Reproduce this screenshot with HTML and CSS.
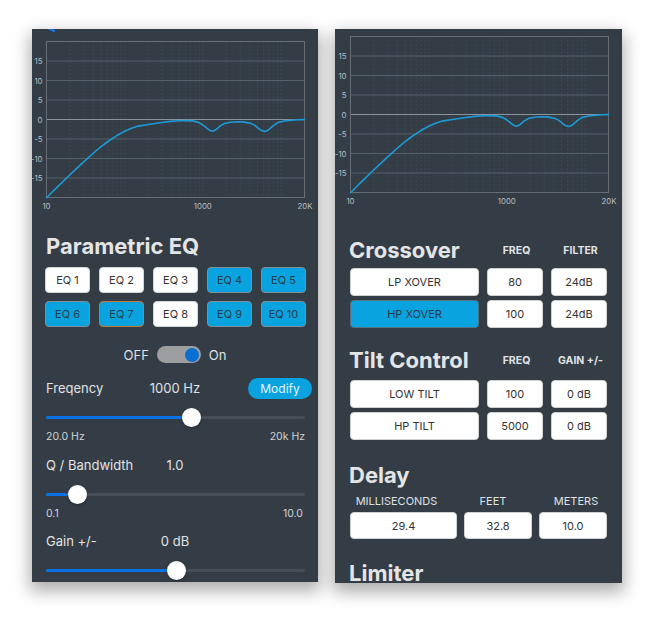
FILE: index.html
```html
<!DOCTYPE html>
<html>
<head>
<meta charset="utf-8">
<link rel="stylesheet" href="styles.css">
</head>
<body>
<div class="stage">
  <section class="panel panel-left">
    <svg class="chart chart-left" width="286" height="204" viewBox="0 0 286 204">
      <path class="back" d="M16,-1 L22,2"/>
      <g transform="translate(14.5,12.5)">
        <path class="vgrid" d="M23.53,0V156M37.29,0V156M47.05,0V156M54.63,0V156M60.82,0V156M66.05,0V156M70.58,0V156M74.58,0V156M78.16,0V156M101.69,0V156M115.45,0V156M125.21,0V156M132.79,0V156M138.98,0V156M144.21,0V156M148.74,0V156M152.74,0V156M156.31,0V156M179.85,0V156M193.61,0V156M203.37,0V156M210.95,0V156M217.14,0V156M222.37,0V156M226.9,0V156M230.9,0V156M234.47,0V156"/>
        <path class="hgrid" d="M0,19.5H258M0,39H258M0,58.5H258M0,97.5H258M0,117H258M0,136.5H258"/>
        <path class="zero" d="M0,78H258"/>
        <rect class="frame" x="0" y="0" width="258" height="156"/>
        <polyline class="curve" points="0,156.2 6,150.2 12,144.4 23.5,133.2 35,122.3 47,111.5 54,105.7 60.7,100.5 70,94.3 78.2,89.7 85,86.7 91.9,84.6 101.7,83 115.4,81 124,79.9 132.8,79.3 140,79.1 146,79.4 152,80.9 156,83.2 160,86.4 163,88.7 165.7,89.8 168.5,88.8 171,86.8 174,84.2 178,82 184,80.7 191,80.3 198,80.6 204,81.7 208,83.6 212,86.8 215,89.1 218.3,90 221,89.1 224,86.6 228,83.2 232,80.9 238,79.5 245,78.7 252,78.3 258,78.1"/>
        <g class="axis ylab">
          <text x="-4" y="19.5">15</text>
          <text x="-4" y="39">10</text>
          <text x="-4" y="58.5">5</text>
          <text x="-4" y="78">0</text>
          <text x="-4" y="97.5">-5</text>
          <text x="-4" y="117">-10</text>
          <text x="-4" y="136.5">-15</text>
        </g>
        <g class="axis xlab">
          <text x="0" y="164">10</text>
          <text x="156.3" y="164">1000</text>
          <text x="258.5" y="164">20K</text>
        </g>
      </g>
    </svg>

    <h2 class="title">Parametric EQ</h2>
    <div class="eq-grid">
      <div class="btn">EQ 1</div>
      <div class="btn">EQ 2</div>
      <div class="btn">EQ 3</div>
      <div class="btn btn-on">EQ 4</div>
      <div class="btn btn-on">EQ 5</div>
      <div class="btn btn-on">EQ 6</div>
      <div class="btn btn-on btn-sel">EQ 7</div>
      <div class="btn">EQ 8</div>
      <div class="btn btn-on">EQ 9</div>
      <div class="btn btn-on">EQ 10</div>
    </div>

    <div class="toggle-row">
      <span>OFF</span>
      <span class="switch"><span class="knob"></span></span>
      <span>On</span>
    </div>

    <div class="param param-first">
      <span class="p-label">Freqency</span>
      <span class="p-value">1000 Hz</span>
      <span class="modify">Modify</span>
    </div>
    <div class="slider">
      <div class="track"></div>
      <div class="fill" style="width:56%"></div>
      <div class="thumb" style="left:56%"></div>
    </div>
    <div class="scale"><span>20.0 Hz</span><span>20k Hz</span></div>

    <div class="param">
      <span class="p-label">Q / Bandwidth</span>
      <span class="p-value">1.0</span>
      <span></span>
    </div>
    <div class="slider">
      <div class="track"></div>
      <div class="fill" style="width:12%"></div>
      <div class="thumb" style="left:12%"></div>
    </div>
    <div class="scale scale-inset"><span>0.1</span><span>10.0</span></div>

    <div class="param">
      <span class="p-label">Gain +/-</span>
      <span class="p-value">0 dB</span>
      <span></span>
    </div>
    <div class="slider">
      <div class="track"></div>
      <div class="fill" style="width:50.2%"></div>
      <div class="thumb" style="left:50.2%"></div>
    </div>
  </section>

  <section class="panel panel-right">
    <svg class="chart chart-right" width="287" height="208" viewBox="0 0 287 208">
      <g transform="translate(15.5,7.5)">
        <path class="vgrid" d="M23.53,0V156M37.29,0V156M47.05,0V156M54.63,0V156M60.82,0V156M66.05,0V156M70.58,0V156M74.58,0V156M78.16,0V156M101.69,0V156M115.45,0V156M125.21,0V156M132.79,0V156M138.98,0V156M144.21,0V156M148.74,0V156M152.74,0V156M156.31,0V156M179.85,0V156M193.61,0V156M203.37,0V156M210.95,0V156M217.14,0V156M222.37,0V156M226.9,0V156M230.9,0V156M234.47,0V156"/>
        <path class="hgrid" d="M0,19.5H258M0,39H258M0,58.5H258M0,97.5H258M0,117H258M0,136.5H258"/>
        <path class="zero" d="M0,78H258"/>
        <rect class="frame" x="0" y="0" width="258" height="156"/>
        <polyline class="curve" points="0,156.2 6,150.2 12,144.4 23.5,133.2 35,122.3 47,111.5 54,105.7 60.7,100.5 70,94.3 78.2,89.7 85,86.7 91.9,84.6 101.7,83 115.4,81 124,79.9 132.8,79.3 140,79.1 146,79.4 152,80.9 156,83.2 160,86.4 163,88.7 165.7,89.8 168.5,88.8 171,86.8 174,84.2 178,82 184,80.7 191,80.3 198,80.6 204,81.7 208,83.6 212,86.8 215,89.1 218.3,90 221,89.1 224,86.6 228,83.2 232,80.9 238,79.5 245,78.7 252,78.3 258,78.1"/>
        <g class="axis ylab">
          <text x="-4" y="19.5">15</text>
          <text x="-4" y="39">10</text>
          <text x="-4" y="58.5">5</text>
          <text x="-4" y="78">0</text>
          <text x="-4" y="97.5">-5</text>
          <text x="-4" y="117">-10</text>
          <text x="-4" y="136.5">-15</text>
        </g>
        <g class="axis xlab">
          <text x="0" y="164">10</text>
          <text x="156.3" y="164">1000</text>
          <text x="258.5" y="164">20K</text>
        </g>
      </g>
    </svg>

    <div class="section-head">
      <h2 class="title">Crossover</h2>
      <span class="col-label">FREQ</span>
      <span class="col-label">FILTER</span>
    </div>
    <div class="rows rows-cross">
      <div class="box">LP XOVER</div>
      <div class="box">80</div>
      <div class="box">24dB</div>
      <div class="box box-on">HP XOVER</div>
      <div class="box">100</div>
      <div class="box">24dB</div>
    </div>

    <div class="section-head head-tilt">
      <h2 class="title">Tilt Control</h2>
      <span class="col-label">FREQ</span>
      <span class="col-label">GAIN +/-</span>
    </div>
    <div class="rows rows-tilt">
      <div class="box">LOW TILT</div>
      <div class="box">100</div>
      <div class="box">0 dB</div>
      <div class="box">HP TILT</div>
      <div class="box">5000</div>
      <div class="box">0 dB</div>
    </div>

    <h2 class="title head-delay">Delay</h2>
    <div class="delay-labels">
      <span>MILLISECONDS</span>
      <span>FEET</span>
      <span>METERS</span>
    </div>
    <div class="delay-rows">
      <div class="box">29.4</div>
      <div class="box">32.8</div>
      <div class="box">10.0</div>
    </div>

    <h2 class="title head-limiter">Limiter</h2>
  </section>
</div>
</body>
</html>
```
FILE: styles.css
```css
html, body {
  margin: 0;
  padding: 0;
  background: #ffffff;
}
body {
  width: 650px;
  height: 617px;
  overflow: hidden;
  font-family: Inter, "Noto Sans", sans-serif;
}
.stage {
  display: flex;
  align-items: flex-start;
  gap: 17px;
  padding: 29px 0 0 32px;
}
.panel {
  background: #343d46;
  box-shadow: 0 7px 16px 2px rgba(0, 0, 0, 0.33);
  overflow: hidden;
  box-sizing: border-box;
  color: #e2e4e6;
}
.panel-left {
  width: 286px;
  height: 553px;
  padding: 0 13px;
}
.panel-right {
  width: 287px;
  height: 554px;
  padding: 0 15px;
}
.chart {
  display: block;
}
.chart-left { margin: 0 -13px; }
.chart-right { margin: 0 -15px; }

.back {
  fill: none;
  stroke: #1877e6;
  stroke-width: 2.4;
  stroke-linecap: round;
}
.vgrid {
  fill: none;
  stroke: #5a636c;
  stroke-width: 0.6;
  stroke-dasharray: 1 3;
}
.hgrid {
  fill: none;
  stroke: #56606a;
  stroke-width: 1;
}
.zero {
  fill: none;
  stroke: #8b939a;
  stroke-width: 1;
}
.frame {
  fill: none;
  stroke: #656e76;
  stroke-width: 1;
}
.curve {
  fill: none;
  stroke: #1a9bd8;
  stroke-width: 1.6;
  stroke-linejoin: round;
  stroke-linecap: round;
}
.axis text {
  font-family: Inter, "Noto Sans", sans-serif;
  font-size: 7.8px;
  fill: #b7bdc2;
  dominant-baseline: central;
}
.ylab text { text-anchor: end; }
.xlab text { text-anchor: middle; }

.title {
  margin: 0;
  font-size: 22px;
  line-height: 26px;
  font-weight: 700;
  color: #e4e5e6;
}
.panel-left .title { padding-left: 1px; }
.panel-right .title { margin-left: -1px; }

/* EQ buttons */
.eq-grid {
  display: grid;
  grid-template-columns: repeat(5, 45px);
  grid-auto-rows: 26px;
  column-gap: 9px;
  row-gap: 8px;
  margin-top: 8px;
}
.btn {
  box-sizing: border-box;
  border-radius: 4px;
  background: #ffffff;
  border: 1px solid #d4d6d8;
  color: #333;
  font-size: 11px;
  display: flex;
  align-items: center;
  justify-content: center;
}
.btn-on {
  background: #09a3df;
  border-color: #7f8e98;
  color: #2c3e4a;
}
.btn-sel {
  border-color: #c5782e;
}

/* toggle */
.toggle-row {
  display: flex;
  justify-content: center;
  align-items: center;
  gap: 8px;
  height: 17px;
  margin-top: 19px;
  font-size: 13px;
  color: #dfe1e3;
}
.switch {
  box-sizing: border-box;
  width: 44px;
  height: 17px;
  border-radius: 9px;
  background: #9d9e9f;
  display: flex;
  justify-content: flex-end;
  align-items: center;
  padding: 0 2px;
}
.knob {
  width: 14px;
  height: 14px;
  border-radius: 50%;
  background: #0b6fd2;
}

/* params */
.param {
  display: grid;
  grid-template-columns: 1fr auto 1fr;
  align-items: center;
  height: 21px;
  margin-top: 11.5px;
  font-size: 13px;
  line-height: 21px;
  color: #e0e2e4;
}
.param-first { margin-top: 15px; }
.p-label { padding-left: 1px; }
.modify {
  justify-self: end;
  margin-right: -7px;
  width: 64px;
  height: 21px;
  border-radius: 11px;
  background: #0aa3e0;
  color: #e6f4fb;
  font-size: 12px;
  display: flex;
  align-items: center;
  justify-content: center;
}
.slider {
  position: relative;
  height: 19px;
  margin: 9px 0 0 1px;
}
.track {
  position: absolute;
  left: 0;
  right: 0;
  top: 8px;
  height: 3px;
  border-radius: 2px;
  background: #464f58;
}
.fill {
  position: absolute;
  left: 0;
  top: 8px;
  height: 3px;
  border-radius: 2px;
  background: #0b72e7;
}
.thumb {
  position: absolute;
  top: 0;
  width: 19px;
  height: 19px;
  margin-left: -9.5px;
  border-radius: 50%;
  background: #ffffff;
  box-shadow: 0 1px 3px rgba(0, 0, 0, 0.3);
}
.scale {
  display: flex;
  justify-content: space-between;
  margin: 4px 0 0 1px;
  height: 12px;
  line-height: 12px;
  font-size: 10.5px;
  color: #d0d3d6;
}
.scale-inset { padding-right: 2px; }

/* right panel */
.section-head {
  display: grid;
  grid-template-columns: 129px 56px 56px;
  column-gap: 8px;
  align-items: center;
}
.head-tilt { margin-top: 19px; }
.col-label {
  text-align: center;
  font-size: 10.5px;
  font-weight: 700;
  color: #e0e2e4;
  padding-left: 3px;
}
.rows {
  display: grid;
  grid-template-columns: 129px 56px 56px;
  grid-auto-rows: 28px;
  column-gap: 8px;
  row-gap: 4px;
}
.rows-cross { margin-top: 5px; }
.rows-tilt { margin-top: 7px; }
.box {
  box-sizing: border-box;
  background: #ffffff;
  border: 1px solid #cfd2d5;
  border-radius: 4px;
  color: #333;
  font-size: 11px;
  display: flex;
  align-items: center;
  justify-content: center;
}
.box-on {
  background: #09a3df;
  border-color: #56707f;
  color: #2a3b47;
}
.head-delay { margin-top: 22px; }
.delay-labels {
  display: grid;
  grid-template-columns: 107px 68px 68px;
  column-gap: 7px;
  margin-top: 6px;
  height: 14px;
  line-height: 14px;
  font-size: 11px;
  color: #dfe1e3;
  text-align: center;
}
.delay-labels span:first-child { padding-right: 14px; }
.delay-labels span:nth-child(2) { padding-right: 10px; }
.delay-labels span:nth-child(3) { padding-left: 6px; }
.delay-rows {
  display: grid;
  grid-template-columns: 107px 68px 68px;
  grid-auto-rows: 27px;
  column-gap: 7px;
  margin-top: 4px;
}
.head-limiter { margin-top: 21px; }
```
